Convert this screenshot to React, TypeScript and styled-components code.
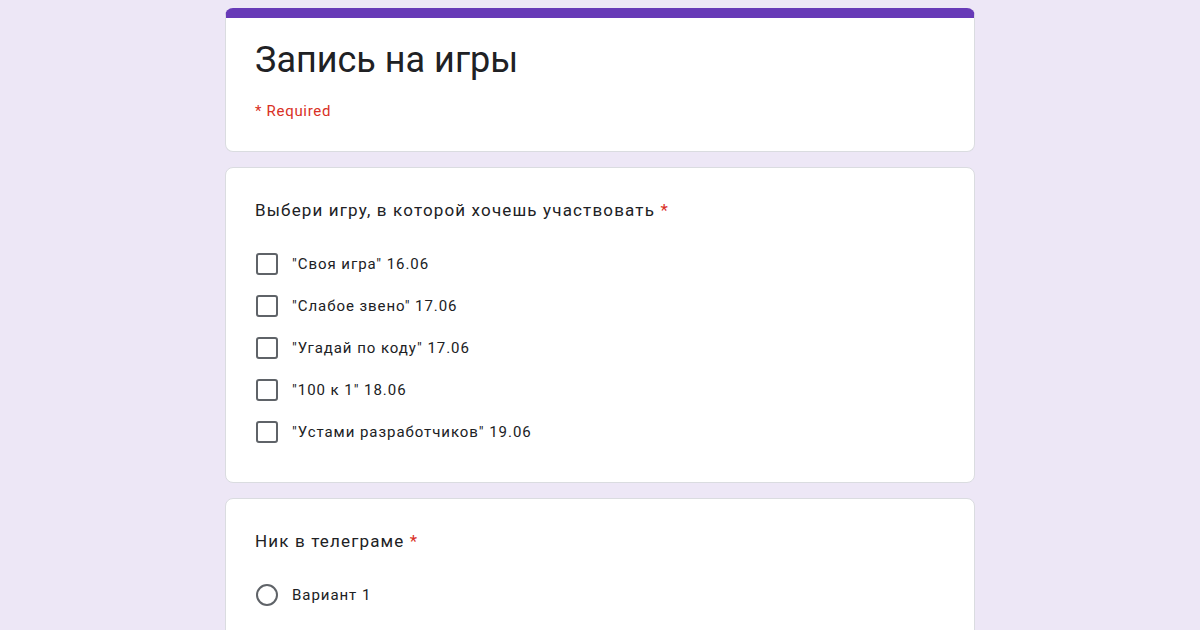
import { createGlobalStyle } from "styled-components";
import styled, { css } from "styled-components";

const COLOR = {
  BG: "#ede7f6",
  PURPLE: "#673ab7",
  BORDER: "#dadce0",
  TEXT: "#202124",
  RED: "#d93025",
  CONTROL: "#5f6368",
};

const GlobalStyle = createGlobalStyle`
  html, body {
    margin: 0;
    padding: 0;
    background: ${COLOR.BG};
    font-family: Roboto, "Noto Sans", Arial, sans-serif;
    color: ${COLOR.TEXT};
  }
  * {
    box-sizing: border-box;
  }
`;

const S = {
  Page: styled.div`
    width: 1200px;
    height: 630px;
    overflow: hidden;
    display: flex;
    justify-content: center;
    padding-top: 8px;
  `,
  Column: styled.div`
    width: 750px;
    display: flex;
    flex-direction: column;
    gap: 15px;
  `,
  Card: styled.div<{ $header?: boolean }>`
    background: #fff;
    border: 1px solid ${COLOR.BORDER};
    border-radius: 8px;
    padding: 30px 24px 29px 29px;
    display: flex;
    flex-direction: column;

    ${({ $header }) =>
      $header &&
      css`
        border-top: 10px solid ${COLOR.PURPLE};
        border-top-color: ${COLOR.PURPLE};
        padding: 20px 24px 30px 29px;
      `}
  `,
  Title: styled.h1`
    margin: 0;
    font-size: 36px;
    line-height: 44px;
    font-weight: 400;
  `,
  Required: styled.div`
    margin-top: 19px;
    font-size: 15px;
    line-height: 20px;
    letter-spacing: 0.7px;
    color: ${COLOR.RED};
  `,
  Question: styled.div`
    font-size: 17px;
    line-height: 24px;
    font-weight: 400;
    letter-spacing: 1.15px;
    margin-bottom: 21px;

    &::after {
      content: " *";
      color: ${COLOR.RED};
    }
  `,
  Options: styled.div`
    display: flex;
    flex-direction: column;
  `,
  Option: styled.label`
    display: flex;
    align-items: center;
    gap: 16px;
    height: 42px;
    font-size: 15px;
    letter-spacing: 0.95px;
  `,
  Box: styled.span<{ $round?: boolean }>`
    width: 22px;
    height: 22px;
    flex: none;
    margin-left: 1px;
    margin-right: -2px;
    border: 2px solid ${COLOR.CONTROL};
    border-radius: ${({ $round }) => ($round ? "50%" : "3px")};
  `,
};

const games = [
  '"Своя игра" 16.06',
  '"Слабое звено" 17.06',
  '"Угадай по коду" 17.06',
  '"100 к 1" 18.06',
  '"Устами разработчиков" 19.06',
];

const App = () => {
  return (
    <>
      <GlobalStyle />
      <S.Page>
        <S.Column>
          <S.Card $header>
            <S.Title>Запись на игры</S.Title>
            <S.Required>* Required</S.Required>
          </S.Card>

          <S.Card>
            <S.Question>Выбери игру, в которой хочешь участвовать</S.Question>
            <S.Options>
              {games.map((g) => (
                <S.Option key={g}>
                  <S.Box />
                  {g}
                </S.Option>
              ))}
            </S.Options>
          </S.Card>

          <S.Card>
            <S.Question>Ник в телеграме</S.Question>
            <S.Options>
              <S.Option>
                <S.Box $round />
                Вариант 1
              </S.Option>
            </S.Options>
          </S.Card>
        </S.Column>
      </S.Page>
    </>
  );
};

export default App;
